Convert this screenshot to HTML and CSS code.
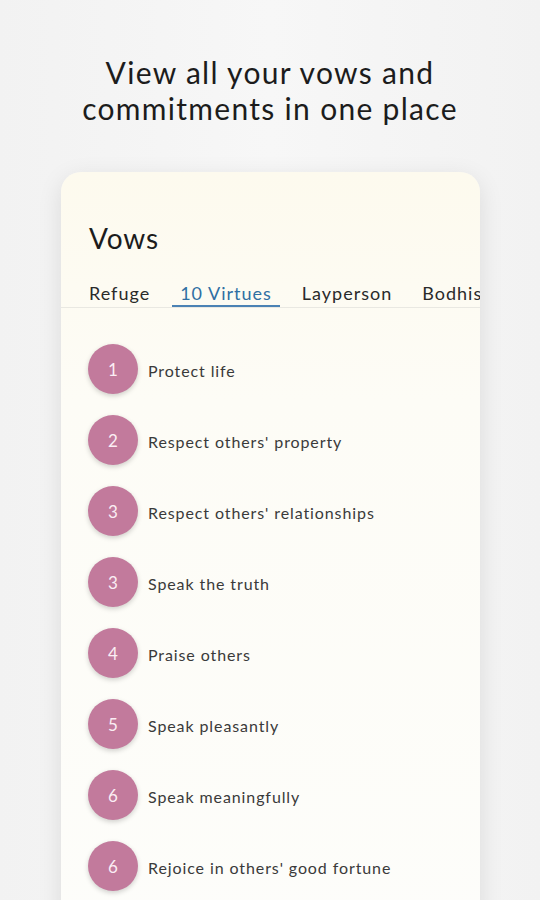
FILE: index.html
```html
<!DOCTYPE html>
<html>
<head>
<meta charset="utf-8">
<link rel="stylesheet" href="styles.css">
</head>
<body>
<div class="screen">
  <h1 class="headline">View all your vows and<br>commitments in one place</h1>
  <div class="card">
    <h2 class="title">Vows</h2>
    <div class="tabs">
      <span class="tab">Refuge</span>
      <span class="tab active">10 Virtues</span>
      <span class="tab">Layperson</span>
      <span class="tab">Bodhisattva</span>
    </div>
    <ul class="list">
      <li class="item"><span class="num">1</span><span class="label">Protect life</span></li>
      <li class="item"><span class="num">2</span><span class="label">Respect others' property</span></li>
      <li class="item"><span class="num">3</span><span class="label">Respect others' relationships</span></li>
      <li class="item"><span class="num">3</span><span class="label">Speak the truth</span></li>
      <li class="item"><span class="num">4</span><span class="label">Praise others</span></li>
      <li class="item"><span class="num">5</span><span class="label">Speak pleasantly</span></li>
      <li class="item"><span class="num">6</span><span class="label">Speak meaningfully</span></li>
      <li class="item"><span class="num">6</span><span class="label">Rejoice in others' good fortune</span></li>
    </ul>
  </div>
</div>
</body>
</html>
```
FILE: styles.css
```css
html, body {
  margin: 0;
  padding: 0;
  background: #f3f3f3;
}
body {
  font-family: "Lato", "Open Sans", sans-serif;
  color: #1e1e1e;
}
.screen {
  width: 540px;
  height: 900px;
  overflow: hidden;
  background: linear-gradient(90deg, #f2f2f2 0%, #f7f7f7 50%, #f2f2f2 100%);
}
.headline {
  margin: 0;
  padding-top: 54px;
  font-size: 30px;
  font-weight: 400;
  line-height: 36px;
  text-align: center;
  letter-spacing: 1.3px;
  color: #1c1c1c;
}
.card {
  margin: 46px 60px 0 61px;
  height: 760px;
  background: linear-gradient(180deg, #fdfaee 0%, #fdfcf6 30%, #fdfdfa 100%);
  border-radius: 20px;
  box-shadow: 0 6px 24px rgba(0, 0, 0, 0.10);
  overflow: hidden;
}
.title {
  margin: 0;
  padding: 48px 0 0 28px;
  font-size: 28px;
  font-weight: 400;
  line-height: 36px;
  color: #1c1c1c;
  letter-spacing: 0.9px;
}
.tabs {
  display: flex;
  gap: 14px;
  padding: 26px 0 0 20px;
  border-bottom: 1px solid #e9e8e2;
  white-space: nowrap;
}
.tab {
  padding: 0 8px 1px;
  font-size: 18px;
  line-height: 22px;
  color: #2a2a2a;
  letter-spacing: 1px;
  border-bottom: 2px solid transparent;
}
.tab.active {
  color: #2f6fa3;
  border-bottom-color: #4b82b4;
}
.list {
  list-style: none;
  margin: 0;
  padding: 36px 0 0 27px;
  display: flex;
  flex-direction: column;
  gap: 21px;
}
.item {
  display: flex;
  align-items: center;
  gap: 10px;
}
.num {
  width: 50px;
  height: 50px;
  border-radius: 50%;
  background: #c27a9c;
  color: #fbeef4;
  display: flex;
  align-items: center;
  justify-content: center;
  font-size: 17px;
  box-shadow: 0 2px 5px rgba(0, 0, 0, 0.18);
  flex: none;
}
.label {
  font-size: 16px;
  color: #3a3a3a;
  letter-spacing: 0.9px;
  padding-top: 3px;
}
```
